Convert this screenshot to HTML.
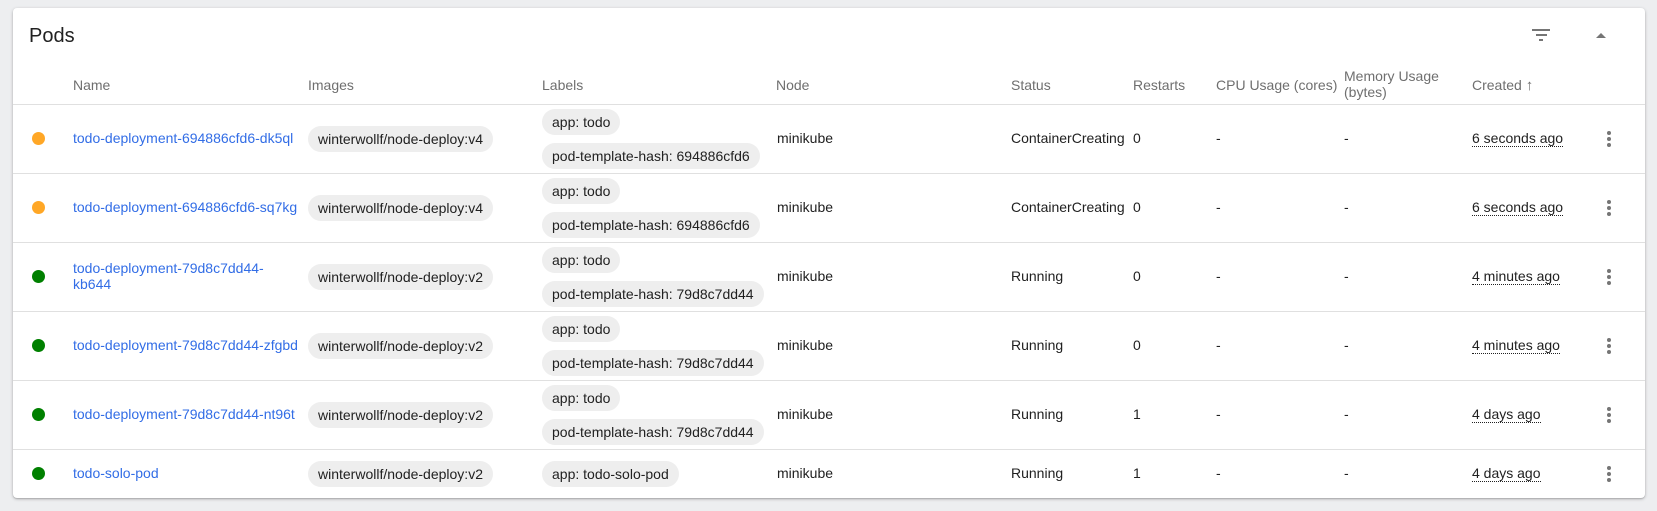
<!DOCTYPE html>
<html><head><meta charset="utf-8"><style>
*{box-sizing:border-box;margin:0;padding:0}
body{width:1657px;height:511px;background:#edeef0;font-family:"Liberation Sans",Roboto,sans-serif;font-size:14px;color:#212121;position:relative;overflow:hidden}
.card{position:absolute;left:13px;top:8px;width:1632px;height:490px;background:#fff;border-radius:4px;box-shadow:0 1px 3px rgba(0,0,0,.25),0 1px 1px rgba(0,0,0,.12)}
.t{position:absolute;white-space:nowrap}
.h{color:#6f6f6f;top:77px}
.line{position:absolute;left:0;width:1632px;height:1px;background:#e0e0e0}
.dot{position:absolute;width:13px;height:13px;border-radius:50%}
.chip{position:absolute;height:26px;line-height:26px;padding:0 10px;border-radius:13px;background:#eeeeee;white-space:nowrap}
a{color:#326de6;text-decoration:none}
.u{border-bottom:1px dotted #212121;line-height:15px}
.k{position:absolute;width:4px;height:4px;border-radius:50%;background:#757575}
.r{position:absolute;left:0;width:1632px}
</style></head><body>
<div class="card">
<div class="t" style="left:16px;top:17px;font-size:20px">Pods</div>
<div style="position:absolute;left:1519px;top:21px;width:18px;height:2px;background:#757575"></div>
<div style="position:absolute;left:1523px;top:26px;width:11px;height:2px;background:#757575"></div>
<div style="position:absolute;left:1526px;top:31px;width:4px;height:2px;background:#757575"></div>
<div style="position:absolute;left:1583px;top:25px;width:0;height:0;border-left:5px solid transparent;border-right:5px solid transparent;border-bottom:5px solid #757575"></div>

<div class="t h" style="left:60px;top:69px">Name</div>
<div class="t h" style="left:295px;top:69px">Images</div>
<div class="t h" style="left:529px;top:69px">Labels</div>
<div class="t h" style="left:763px;top:69px">Node</div>
<div class="t h" style="left:998px;top:69px">Status</div>
<div class="t h" style="left:1120px;top:69px">Restarts</div>
<div class="t h" style="left:1203px;top:69px">CPU Usage (cores)</div>
<div class="t h" style="left:1331px;top:60px;line-height:16px">Memory Usage<br>(bytes)</div>
<div class="t h" style="left:1459px;top:69px">Created <b style="font-size:15px">↑</b></div>
<div class="line" style="top:96px"></div>
</div>
<div style="position:absolute;left:13px;top:8px">
<div class="r" style="top:96px;height:69px">
<div class="dot" style="left:19px;top:28px;background:#ffa726"></div>
<div class="t" style="left:60px;top:26px"><a>todo-deployment-694886cfd6-dk5ql</a></div>
<div class="chip" style="left:295px;top:22px">winterwollf/node-deploy:v4</div>
<div class="chip" style="left:529px;top:5px">app: todo</div>
<div class="chip" style="left:529px;top:39px">pod-template-hash: 694886cfd6</div>
<div class="t" style="left:764px;top:26px">minikube</div>
<div class="t" style="left:998px;top:26px">ContainerCreating</div>
<div class="t" style="left:1120px;top:26px">0</div>
<div class="t" style="left:1203px;top:26px">-</div>
<div class="t" style="left:1331px;top:26px">-</div>
<div class="t u" style="left:1459px;top:27px">6 seconds ago</div>
<div class="k" style="left:1594px;top:27px"></div><div class="k" style="left:1594px;top:33px"></div><div class="k" style="left:1594px;top:39px"></div>
<div class="line" style="top:69px"></div>
</div>
<div class="r" style="top:165px;height:69px">
<div class="dot" style="left:19px;top:28px;background:#ffa726"></div>
<div class="t" style="left:60px;top:26px"><a>todo-deployment-694886cfd6-sq7kg</a></div>
<div class="chip" style="left:295px;top:22px">winterwollf/node-deploy:v4</div>
<div class="chip" style="left:529px;top:5px">app: todo</div>
<div class="chip" style="left:529px;top:39px">pod-template-hash: 694886cfd6</div>
<div class="t" style="left:764px;top:26px">minikube</div>
<div class="t" style="left:998px;top:26px">ContainerCreating</div>
<div class="t" style="left:1120px;top:26px">0</div>
<div class="t" style="left:1203px;top:26px">-</div>
<div class="t" style="left:1331px;top:26px">-</div>
<div class="t u" style="left:1459px;top:27px">6 seconds ago</div>
<div class="k" style="left:1594px;top:27px"></div><div class="k" style="left:1594px;top:33px"></div><div class="k" style="left:1594px;top:39px"></div>
<div class="line" style="top:69px"></div>
</div>
<div class="r" style="top:234px;height:69px">
<div class="dot" style="left:19px;top:28px;background:#008000"></div>
<div class="t" style="left:60px;top:18px;line-height:16px"><a>todo-deployment-79d8c7dd44-<br>kb644</a></div>
<div class="chip" style="left:295px;top:22px">winterwollf/node-deploy:v2</div>
<div class="chip" style="left:529px;top:5px">app: todo</div>
<div class="chip" style="left:529px;top:39px">pod-template-hash: 79d8c7dd44</div>
<div class="t" style="left:764px;top:26px">minikube</div>
<div class="t" style="left:998px;top:26px">Running</div>
<div class="t" style="left:1120px;top:26px">0</div>
<div class="t" style="left:1203px;top:26px">-</div>
<div class="t" style="left:1331px;top:26px">-</div>
<div class="t u" style="left:1459px;top:27px">4 minutes ago</div>
<div class="k" style="left:1594px;top:27px"></div><div class="k" style="left:1594px;top:33px"></div><div class="k" style="left:1594px;top:39px"></div>
<div class="line" style="top:69px"></div>
</div>
<div class="r" style="top:303px;height:69px">
<div class="dot" style="left:19px;top:28px;background:#008000"></div>
<div class="t" style="left:60px;top:26px"><a>todo-deployment-79d8c7dd44-zfgbd</a></div>
<div class="chip" style="left:295px;top:22px">winterwollf/node-deploy:v2</div>
<div class="chip" style="left:529px;top:5px">app: todo</div>
<div class="chip" style="left:529px;top:39px">pod-template-hash: 79d8c7dd44</div>
<div class="t" style="left:764px;top:26px">minikube</div>
<div class="t" style="left:998px;top:26px">Running</div>
<div class="t" style="left:1120px;top:26px">0</div>
<div class="t" style="left:1203px;top:26px">-</div>
<div class="t" style="left:1331px;top:26px">-</div>
<div class="t u" style="left:1459px;top:27px">4 minutes ago</div>
<div class="k" style="left:1594px;top:27px"></div><div class="k" style="left:1594px;top:33px"></div><div class="k" style="left:1594px;top:39px"></div>
<div class="line" style="top:69px"></div>
</div>
<div class="r" style="top:372px;height:69px">
<div class="dot" style="left:19px;top:28px;background:#008000"></div>
<div class="t" style="left:60px;top:26px"><a>todo-deployment-79d8c7dd44-nt96t</a></div>
<div class="chip" style="left:295px;top:22px">winterwollf/node-deploy:v2</div>
<div class="chip" style="left:529px;top:5px">app: todo</div>
<div class="chip" style="left:529px;top:39px">pod-template-hash: 79d8c7dd44</div>
<div class="t" style="left:764px;top:26px">minikube</div>
<div class="t" style="left:998px;top:26px">Running</div>
<div class="t" style="left:1120px;top:26px">1</div>
<div class="t" style="left:1203px;top:26px">-</div>
<div class="t" style="left:1331px;top:26px">-</div>
<div class="t u" style="left:1459px;top:27px">4 days ago</div>
<div class="k" style="left:1594px;top:27px"></div><div class="k" style="left:1594px;top:33px"></div><div class="k" style="left:1594px;top:39px"></div>
<div class="line" style="top:69px"></div>
</div>
<div class="r" style="top:441px;height:49px">
<div class="dot" style="left:19px;top:18px;background:#008000"></div>
<div class="t" style="left:60px;top:16px"><a>todo-solo-pod</a></div>
<div class="chip" style="left:295px;top:12px">winterwollf/node-deploy:v2</div>
<div class="chip" style="left:529px;top:12px">app: todo-solo-pod</div>
<div class="t" style="left:764px;top:16px">minikube</div>
<div class="t" style="left:998px;top:16px">Running</div>
<div class="t" style="left:1120px;top:16px">1</div>
<div class="t" style="left:1203px;top:16px">-</div>
<div class="t" style="left:1331px;top:16px">-</div>
<div class="t u" style="left:1459px;top:17px">4 days ago</div>
<div class="k" style="left:1594px;top:17px"></div><div class="k" style="left:1594px;top:23px"></div><div class="k" style="left:1594px;top:29px"></div>
</div>
</div>
</body></html>
